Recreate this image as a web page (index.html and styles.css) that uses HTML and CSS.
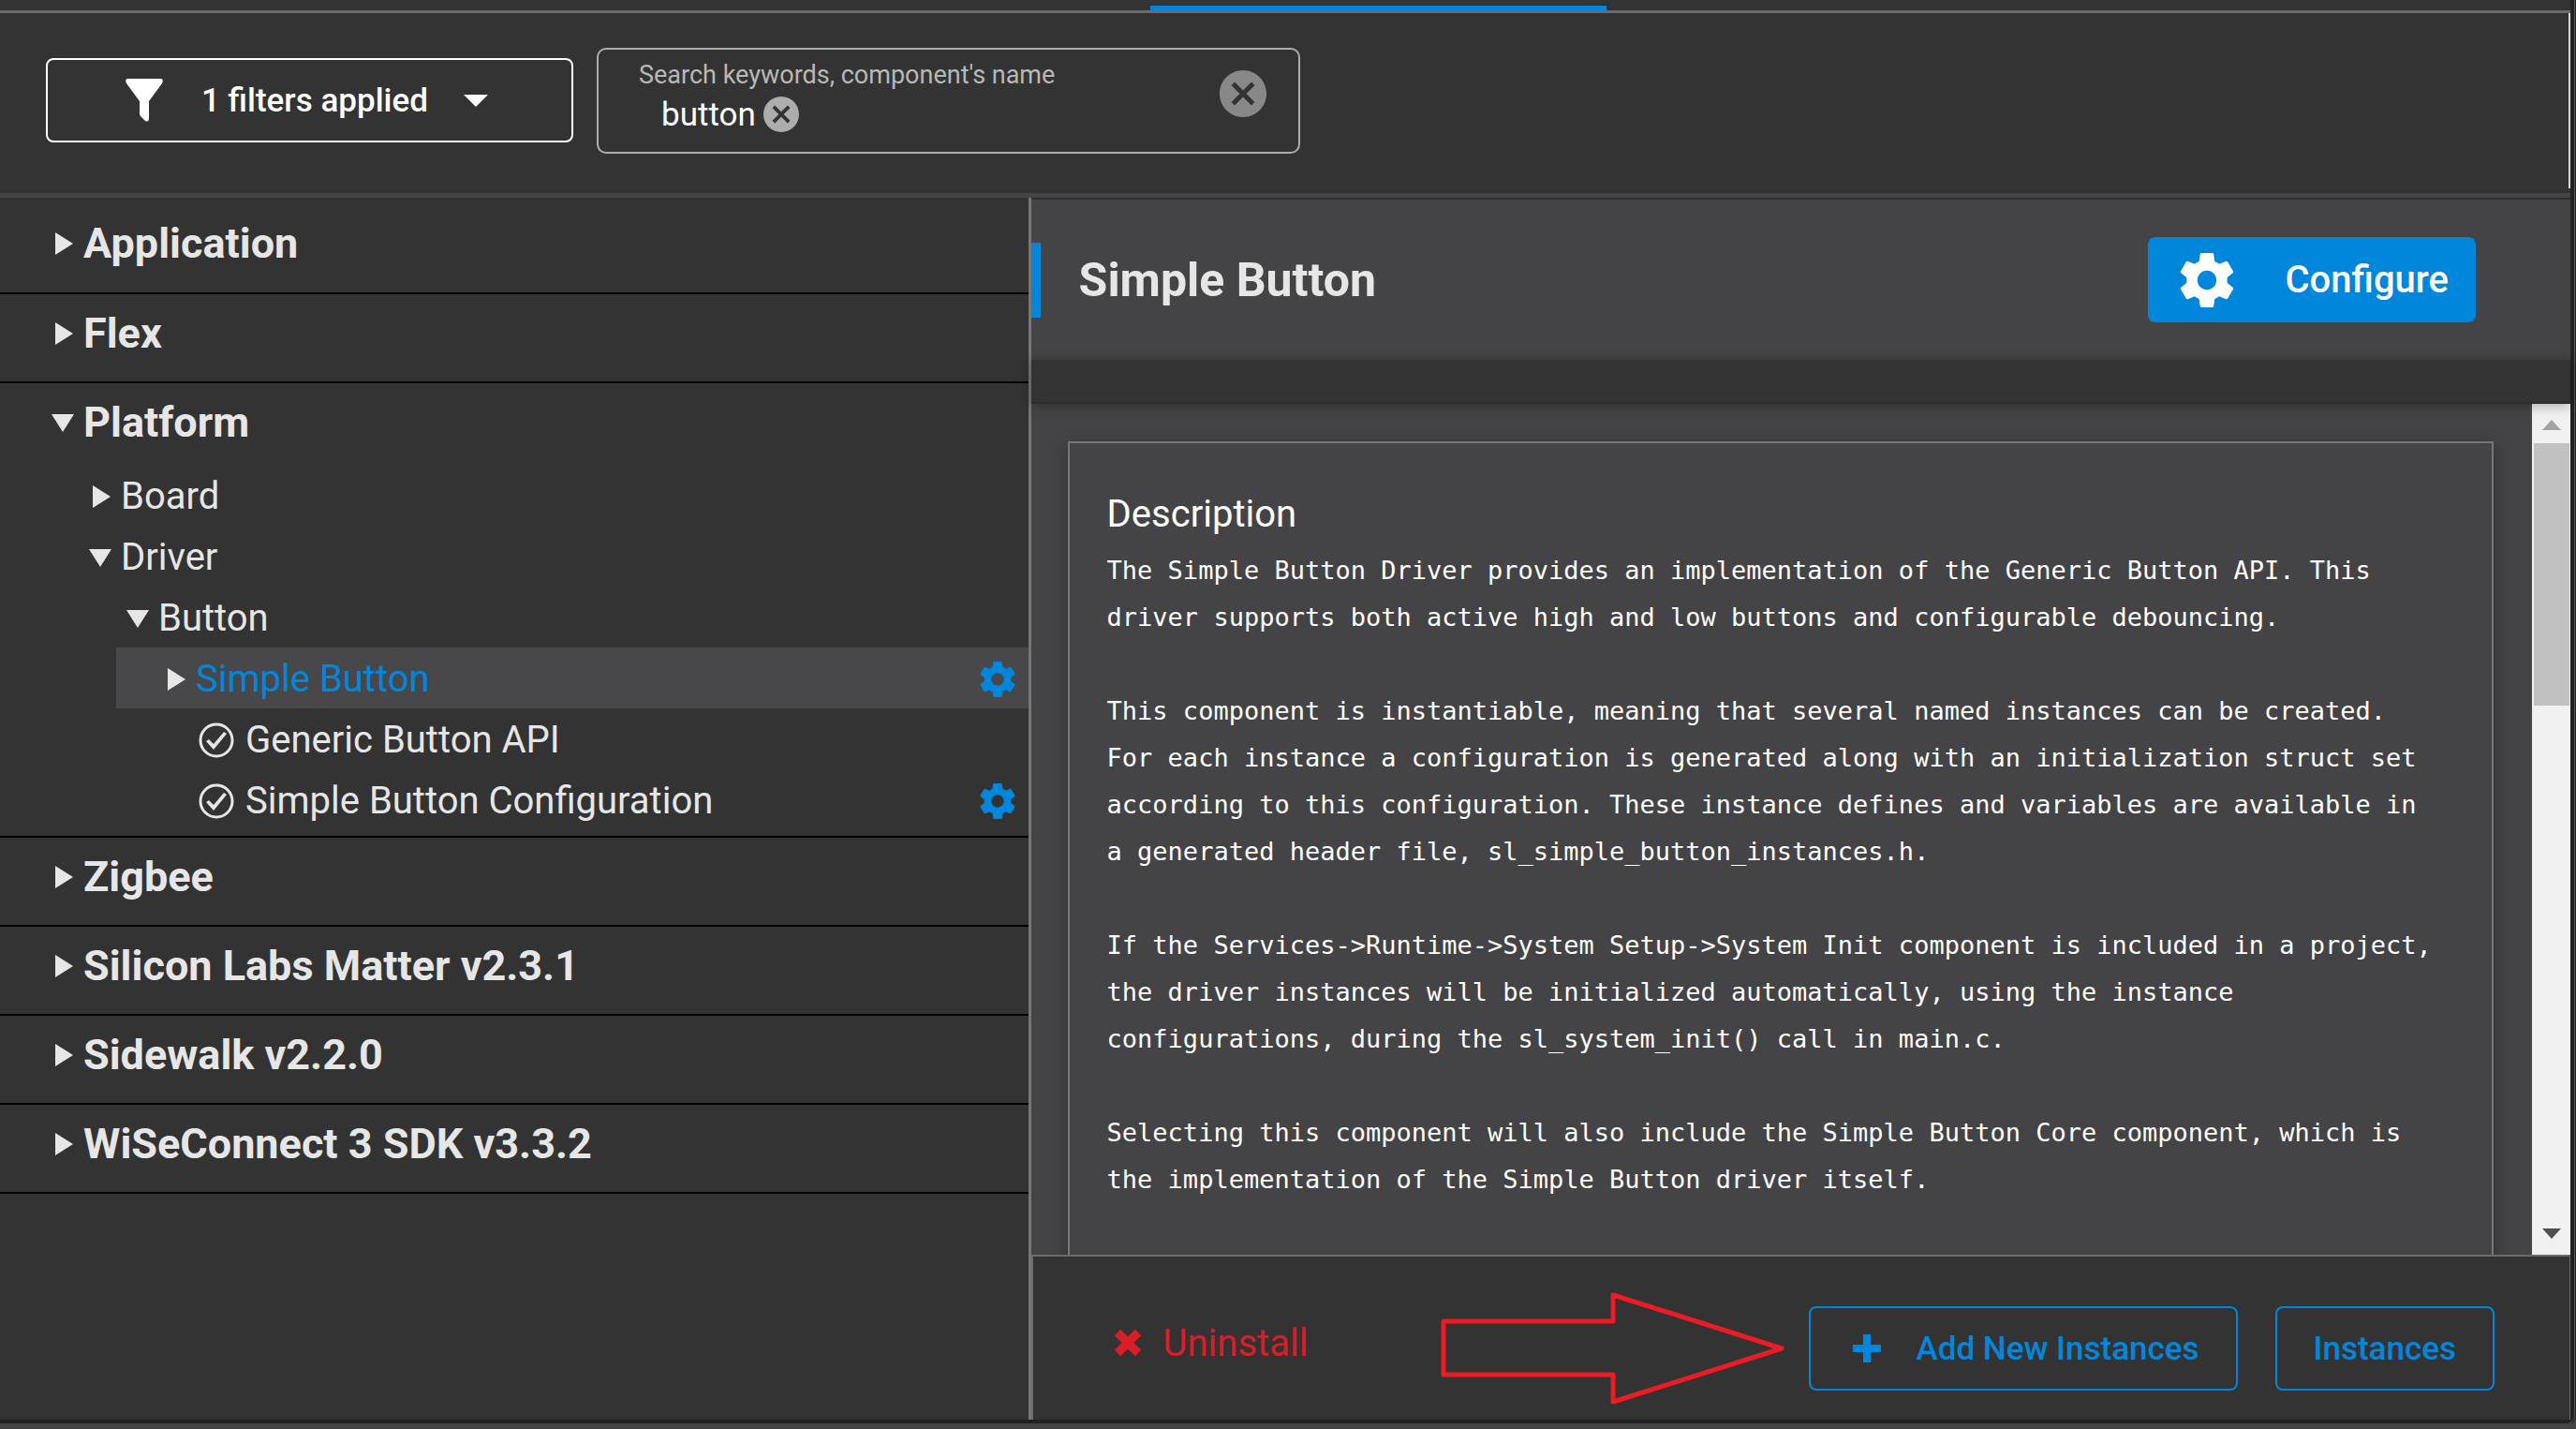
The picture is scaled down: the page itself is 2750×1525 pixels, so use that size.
FILE: index.html
```html
<!DOCTYPE html>
<html lang="en">
<head>
<meta charset="utf-8">
<title>Software Components</title>
<link rel="stylesheet" href="styles.css">
</head>
<body>
<svg class="defs" aria-hidden="true">
  <symbol id="gear" viewBox="2 2 20 20"><path d="M19.43 12.98c.04-.32.07-.64.07-.98s-.03-.66-.07-.98l2.11-1.65c.19-.15.24-.42.12-.64l-2-3.46c-.12-.22-.39-.3-.61-.22l-2.49 1c-.52-.4-1.08-.73-1.69-.98l-.38-2.65C14.46 2.18 14.25 2 14 2h-4c-.25 0-.46.18-.49.42l-.38 2.65c-.61.25-1.17.59-1.69.98l-2.49-1c-.23-.09-.49 0-.61.22l-2 3.46c-.13.22-.07.49.12.64l2.11 1.65c-.04.32-.07.65-.07.98s.03.66.07.98l-2.11 1.65c-.19.15-.24.42-.12.64l2 3.46c.12.22.39.3.61.22l2.49-1c.52.4 1.08.73 1.69.98l.38 2.65c.03.24.24.42.49.42h4c.25 0 .46-.18.49-.42l.38-2.65c.61-.25 1.17-.59 1.69-.98l2.49 1c.23.09.49 0 .61-.22l2-3.46c.12-.22.07-.49-.12-.64l-2.11-1.65zM12 15.5c-1.93 0-3.5-1.57-3.5-3.5s1.57-3.5 3.5-3.5 3.5 1.57 3.5 3.5-1.57 3.5-3.5 3.5z"/></symbol>
  <symbol id="right" viewBox="0 0 24 24"><path d="M4 0 23 12 4 24z"/></symbol>
  <symbol id="down" viewBox="0 0 24 24"><path d="M0 3H24L12 22z"/></symbol>
  <symbol id="check" viewBox="0 0 38 38"><circle cx="19" cy="19" r="17" fill="none" stroke="currentColor" stroke-width="3"/><path d="M8 20l3-2 5 5 11-13 3 2-14 17z"/></symbol>
  <symbol id="clear" viewBox="2 2 20 20"><path d="M12 2C6.470 2 2 6.470 2 12s4.470 10 10 10 10-4.470 10-10S17.530 2 12 2zm5 13.590L15.590 17 12 13.410 8.410 17 7 15.590 10.590 12 7 8.410 8.410 7 12 10.590 15.590 7 17 8.410 13.410 12 17 15.590z"/></symbol>
</svg>
<div class="window">
  <div class="tabs"><div class="tab-active"></div></div>
  <header class="toolbar">
    <button class="filter" type="button">
      <svg class="funnel" viewBox="0 0 40 46"><path d="M2 0H38Q41 1 39 5L25 24V42Q25 47 21 45L16 40Q15 39 15 37V24L1 5Q-1 1 2 0z"/></svg>
      <span>1 filters applied</span>
      <svg class="caret" viewBox="0 0 26 13"><path d="M0 0H26L13 13z"/></svg>
    </button>
    <div class="search">
      <div class="search-body">
        <label class="search-label" for="keywords">Search keywords, component's name</label>
        <div class="search-line">
          <span class="chip">button</span>
          <button class="chip-clear" type="button" aria-label="Remove keyword"><svg><use href="#clear"/></svg></button>
          <input id="keywords" type="text">
        </div>
      </div>
      <button class="search-clear" type="button" aria-label="Clear search"><svg><use href="#clear"/></svg></button>
    </div>
  </header>
  <main class="main">
    <nav class="tree">
      <section class="group"><h2><svg class="tri"><use href="#right"/></svg>Application</h2></section>
      <section class="group"><h2><svg class="tri"><use href="#right"/></svg>Flex</h2></section>
      <section class="group">
        <h2><svg class="tri"><use href="#down"/></svg>Platform</h2>
        <ul class="branch">
          <li><div class="node"><svg class="tri"><use href="#right"/></svg>Board</div></li>
          <li><div class="node"><svg class="tri"><use href="#down"/></svg>Driver</div>
            <ul>
              <li><div class="node"><svg class="tri"><use href="#down"/></svg>Button</div>
                <ul>
                  <li><div class="node selected"><svg class="tri"><use href="#right"/></svg><a href="#simple">Simple Button</a><svg class="node-gear"><use href="#gear"/></svg></div></li>
                  <li><div class="node leaf"><svg class="check"><use href="#check"/></svg>Generic Button API</div></li>
                  <li><div class="node leaf"><svg class="check"><use href="#check"/></svg>Simple Button Configuration<svg class="node-gear"><use href="#gear"/></svg></div></li>
                </ul>
              </li>
            </ul>
          </li>
        </ul>
      </section>
      <section class="group"><h2><svg class="tri"><use href="#right"/></svg>Zigbee</h2></section>
      <section class="group"><h2><svg class="tri"><use href="#right"/></svg>Silicon Labs Matter v2.3.1</h2></section>
      <section class="group"><h2><svg class="tri"><use href="#right"/></svg>Sidewalk v2.2.0</h2></section>
      <section class="group"><h2><svg class="tri"><use href="#right"/></svg>WiSeConnect 3 SDK v3.3.2</h2></section>
    </nav>
    <section class="detail" id="simple">
      <header class="detail-head">
        <h1>Simple Button</h1>
        <button class="configure" type="button"><svg><use href="#gear"/></svg>Configure</button>
      </header>
      <div class="band"></div>
      <div class="scroller">
        <div class="content">
          <article class="card">
            <h3>Description</h3>
            <pre>The Simple Button Driver provides an implementation of the Generic Button API. This
driver supports both active high and low buttons and configurable debouncing.

This component is instantiable, meaning that several named instances can be created.
For each instance a configuration is generated along with an initialization struct set
according to this configuration. These instance defines and variables are available in
a generated header file, sl_simple_button_instances.h.

If the Services-&gt;Runtime-&gt;System Setup-&gt;System Init component is included in a project,
the driver instances will be initialized automatically, using the instance
configurations, during the sl_system_init() call in main.c.

Selecting this component will also include the Simple Button Core component, which is
the implementation of the Simple Button driver itself.</pre>
          </article>
        </div>
        <div class="scrollbar">
          <svg class="scroll-up" viewBox="0 0 20 11"><path d="M0 11H20L10 0z"/></svg>
          <div class="track"><div class="thumb"></div></div>
          <svg class="scroll-down" viewBox="0 0 20 11"><path d="M0 0H20L10 11z"/></svg>
        </div>
      </div>
      <footer class="actions">
        <button class="uninstall" type="button"><svg viewBox="0 0 30 30"><path d="M4 4 26 26M26 4 4 26" fill="none" stroke="currentColor" stroke-width="9"/></svg>Uninstall</button>
        <svg class="arrow" viewBox="0 0 368 120"><path d="M3 31H184V3L364 60 184 117V88H3z"/></svg>
        <button class="outline" type="button"><svg viewBox="0 0 30 30"><path d="M11 0h8v11h11v8H19v11h-8V19H0v-8h11z"/></svg>Add New Instances</button>
        <button class="outline" type="button">Instances</button>
      </footer>
    </section>
  </main>
</div>
</body>
</html>
```
FILE: styles.css
```css
* { box-sizing: border-box; }
body { margin: 0; background: #444446; font-family: Roboto, "Liberation Sans", sans-serif; color: #e6e6e6; }
h1, h2, h3, ul, pre { margin: 0; padding: 0; }
ul { list-style: none; }
button { font: inherit; color: inherit; background: none; border: 0; padding: 0; display: flex; align-items: center; }
svg { fill: currentColor; flex: none; display: block; }
.defs { display: none; }

.window { height: calc(100vh - 6px); min-height: 1000px; margin-right: 2px; display: flex; flex-direction: column; background: #333; border: solid #222; border-width: 0 4px 4px 0; border-bottom-right-radius: 8px; box-shadow: 0 0 0 1px #555, 0 0 0 2px #222; }
.tabs { height: 14px; flex: none; border-bottom: 3px solid #6b6b6b; padding-top: 6px; }
.tab-active { height: 5px; width: 487px; margin-left: 1228px; background: #0087dc; }

.toolbar { flex: none; height: 197px; border-bottom: 5px solid #444446; padding: 37px 49px; display: flex; align-items: flex-start; gap: 25px; color: #fff; background: linear-gradient(#d8d8d8, #d8d8d8) right top / 2px 187px no-repeat; }
.filter { width: 563px; height: 90px; margin-top: 11px; border: 2px solid #fff; border-radius: 8px; padding-left: 83px; font-size: 35px; font-weight: 500; }
.funnel { width: 40px; height: 46px; margin-right: 41px; }
.caret { width: 26px; height: 13px; margin-left: 38px; }
.search { width: 751px; height: 113px; border: 2px solid #adadad; border-radius: 10px; padding: 0 34px 0 43px; display: flex; justify-content: space-between; }
.search-body { flex: 1; min-width: 0; padding-top: 10px; }
.search-label { display: block; font-size: 27px; line-height: 34px; color: #b8b8b8; }
.search-line { display: flex; align-items: center; height: 50px; padding-left: 24px; font-size: 35px; gap: 8px; }
.search-line input { flex: 1; min-width: 0; background: none; border: 0; outline: 0; color: #fff; font: inherit; }
.chip-clear, .chip-clear svg { width: 38px; height: 38px; color: #adadad; }
.search-clear, .search-clear svg { width: 50px; height: 50px; color: #888; }
.search-clear { margin-top: 22px; }

.main { flex: 1; min-height: 0; display: flex; }
.tree { width: 40%; flex: none; }
.group { border-bottom: 2px solid #000; }
.group h2 { height: 93px; padding: 0 0 10px 55px; display: flex; align-items: center; gap: 10px; font-size: 45px; font-weight: 700; }
.group:first-child h2 { height: 101px; padding-bottom: 4px; }
.tri { width: 24px; height: 24px; }
.branch { padding: 0 0 6px 0; margin-top: -6px; }
.node { height: 65px; padding: 2px 0 0 95px; display: flex; align-items: center; gap: 10px; font-size: 40px; }
ul ul .node { padding-left: 135px; }
ul ul ul .node { padding-left: 51px; margin-left: 124px; }
.branch > li:last-child > .node { padding-left: 95px; }
ul ul ul .leaf { padding-left: 88px; gap: 12px; }
.node a { color: #0087dc; text-decoration: none; }
.selected { background: #48484a; }
.check { width: 38px; height: 38px; }
.node-gear { width: 38px; height: 38px; margin: 0 14px 0 auto; color: #0087dc; }

.detail { flex: 1; min-width: 0; border-left: 3px solid #777; display: flex; flex-direction: column; }
.detail-head { flex: none; height: 173px; border-top: 2px solid #2d2d2f; background: #444446; display: flex; align-items: center; justify-content: space-between; padding-right: 101px; }
.detail-head h1 { height: 80px; border-left: 10px solid #0087dc; padding-left: 41px; font-size: 50px; line-height: 80px; font-weight: 700; }
.configure { height: 91px; background: #0087dc; color: #fff; border-radius: 8px; padding: 0 29px 0 34px; gap: 54px; font-size: 40px; font-weight: 500; }
.configure svg { width: 58px; height: 58px; }
.band { flex: none; height: 47px; background: #333; border-bottom: 2px solid #2d2d2d; box-shadow: 0 2px 12px rgba(0,0,0,.3); z-index: 1; }
.scroller { flex: 1; min-height: 0; display: flex; background: #444446; }
.content { flex: 1; min-width: 0; padding: 40px 41px 0 39px; overflow: hidden; }
.card { min-height: 1000px; border: 2px solid #777; padding: 48px 40px; color: #fff; box-shadow: 0 4px 16px rgba(0,0,0,.3); }
.card h3 { font-size: 40px; line-height: 56px; font-weight: 400; padding-bottom: 7px; }
.card pre { font-family: "DejaVu Sans Mono", monospace; font-size: 27px; line-height: 50px; }
.scrollbar { width: 41px; background: #f0f0f0; display: flex; flex-direction: column; align-items: center; padding: 17px 0; color: #505050; }
.scrollbar svg { width: 20px; height: 11px; }
.scroll-up { color: #a3a3a3; }
.track { flex: 1; align-self: stretch; padding: 14px 1px 14px 2px; }
.thumb { height: 34%; background: #c1c1c1; }
.actions { flex: none; height: 176px; border: solid #6b6b6b; border-width: 2px 1px 0 2px; padding: 22px 80px 0 86px; display: flex; align-items: center; gap: 40px; position: relative; }
.uninstall { color: #da1e28; font-size: 40px; gap: 23px; margin: 0 auto 12px 0; }
.uninstall svg { width: 30px; height: 30px; }
.arrow { position: absolute; right: 837px; top: 38px; width: 368px; height: 120px; fill: none; stroke: #ed1c24; stroke-width: 5; stroke-linejoin: round; }
.outline { height: 90px; border: 2px solid #0087dc; border-radius: 8px; padding: 0 39px; gap: 38px; color: #0087dc; font-size: 35px; font-weight: 500; }
.outline svg { width: 30px; height: 30px; margin-left: 6px; }
```
